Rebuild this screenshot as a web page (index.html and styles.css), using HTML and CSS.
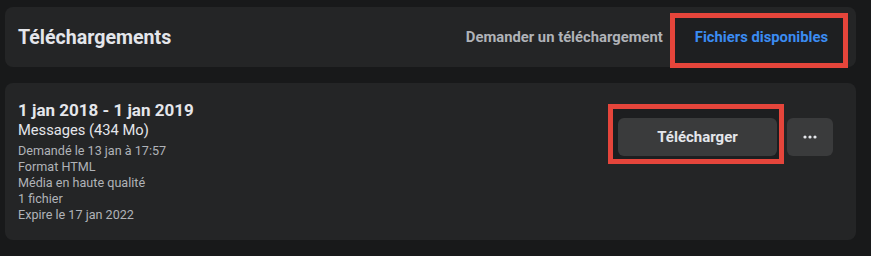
FILE: index.html
```html
<!DOCTYPE html>
<html lang="fr">
<head>
<meta charset="utf-8">
<title>Téléchargements</title>
<link rel="stylesheet" href="styles.css">
</head>
<body>
<main class="page">
  <header class="card header">
    <h1 class="title">Téléchargements</h1>
    <nav class="tabs">
      <a class="tab">Demander un téléchargement</a>
      <a class="tab active">Fichiers disponibles</a>
    </nav>
  </header>
  <section class="card file">
    <div class="info">
      <div class="range">1 jan 2018 - 1 jan 2019</div>
      <div class="name">Messages (434 Mo)</div>
      <div class="meta">Demandé le 13 jan à 17:57</div>
      <div class="meta">Format HTML</div>
      <div class="meta">Média en haute qualité</div>
      <div class="meta">1 fichier</div>
      <div class="meta">Expire le 17 jan 2022</div>
    </div>
    <div class="actions">
      <button class="btn download">Télécharger</button>
      <button class="btn more" aria-label="Plus">
        <svg width="14" height="4" viewBox="0 0 14 4"><circle cx="2" cy="2" r="1.6" fill="#e4e6eb"/><circle cx="7" cy="2" r="1.6" fill="#e4e6eb"/><circle cx="12" cy="2" r="1.6" fill="#e4e6eb"/></svg>
      </button>
    </div>
  </section>
</main>
</body>
</html>
```

FILE: styles.css
```css
* { box-sizing: border-box; }
html, body { margin: 0; height: 100%; }
body {
  background: #18191a;
  font-family: Roboto, "Liberation Sans", sans-serif;
  color: #e4e6eb;
}
.page {
  padding: 7px 15px 0 5px;
  display: flex;
  flex-direction: column;
  gap: 16px;
}
.card {
  background: #242526;
  border-radius: 8px;
  position: relative;
  z-index: 0;
}
.header {
  height: 60px;
  display: flex;
  align-items: stretch;
  justify-content: space-between;
  padding: 0 12px 0 13px;
}
.title {
  margin: 0;
  align-self: center;
  font-size: 19.6px;
  line-height: 24px;
  font-weight: 700;
  color: #e4e6eb;
  padding-top: 2px;
}
.tabs {
  display: flex;
  align-items: stretch;
}
.tab {
  display: flex;
  align-items: center;
  padding: 0 16px;
  font-size: 14.8px;
  line-height: 20px;
  font-weight: 700;
  color: #b0b3b8;
  position: relative;
}
.tab.active { color: #3b8cf2; }
.tab.active::before {
  content: "";
  position: absolute;
  left: -9px;
  right: -4px;
  top: 6px;
  bottom: -1px;
  border: 5px solid #e5453b;
  background: #1e1f21;
  z-index: -1;
}
.file {
  height: 157px;
  display: flex;
  justify-content: space-between;
  padding: 17px 23px 16px 13px;
}
.range {
  font-size: 17px;
  line-height: 20px;
  font-weight: 700;
}
.name {
  font-size: 14.7px;
  line-height: 20px;
  margin-bottom: 3px;
}
.meta {
  font-size: 12.6px;
  line-height: 16px;
  color: #b0b3b8;
}
.actions {
  display: flex;
  gap: 10px;
  align-items: flex-start;
  padding-top: 18px;
}
.btn {
  height: 38px;
  border: 0;
  border-radius: 6px;
  background: #3a3b3c;
  color: #e4e6eb;
  font-family: inherit;
  font-size: 15px;
  font-weight: 700;
  display: flex;
  align-items: center;
  justify-content: center;
}
.download {
  width: 159px;
  position: relative;
}
.download::before {
  content: "";
  position: absolute;
  left: -10px;
  right: -7px;
  top: -14px;
  bottom: -8px;
  border: 5px solid #e5453b;
  background: #1d1e20;
  z-index: -1;
}
.more { width: 46px; }
```
